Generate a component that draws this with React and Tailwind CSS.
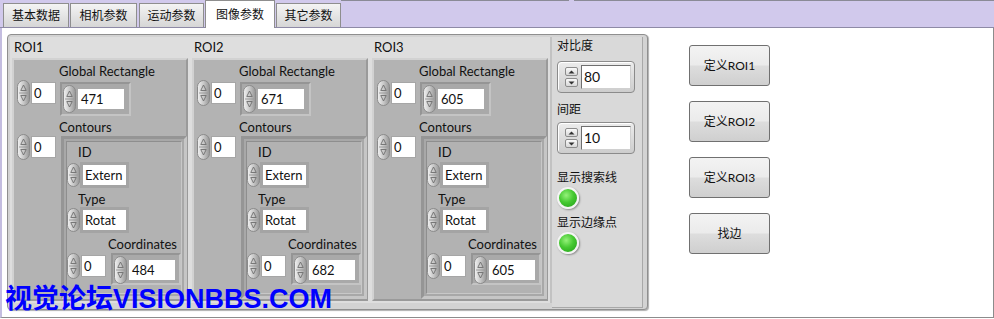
import { useId } from 'react';

const FONT = "font-['Lato','Noto_Sans_CJK_SC',sans-serif]";

function Pill({ h = 26 }) {
  const id = useId();
  const mid = h / 2;
  return (
    <svg width="13" height={h} viewBox={`0 0 13 ${h}`} className="shrink-0">
      <defs>
        <linearGradient id={id} x1="0" x2="1" y1="0" y2="0">
          <stop offset="0" stopColor="#f2f2f2" />
          <stop offset="0.5" stopColor="#c8c8c8" />
          <stop offset="1" stopColor="#959595" />
        </linearGradient>
      </defs>
      <rect x="0.5" y="0.5" width="12" height={h - 1} rx="6" fill={`url(#${id})`} stroke="#8a8a8a" />
      <line x1="2" y1={mid} x2="11" y2={mid} stroke="#9a9a9a" />
      <path d={`M6.5 ${mid - 8} L4 ${mid - 3} M6.5 ${mid - 8} L9 ${mid - 3} M3.5 ${mid - 2.5} H9.5`} stroke="#6e6e6e" fill="none" strokeWidth="0.9" />
      <path d={`M6.5 ${mid + 8} L4 ${mid + 3} M6.5 ${mid + 8} L9 ${mid + 3} M3.5 ${mid + 2.5} H9.5`} stroke="#6e6e6e" fill="none" strokeWidth="0.9" />
    </svg>
  );
}

function IndexCtl({ value, className = '' }) {
  return (
    <div className={`flex items-center ${className}`}>
      <Pill h={26} />
      <div className="ml-[1px] p-[1px] bg-[#a6a6a6]">
        <div className="w-[23px] h-[20px] bg-white text-[13px] leading-[20px] pl-[2px] text-[#111]">{value}</div>
      </div>
    </div>
  );
}

function TextCtl({ value, className = '' }) {
  return (
    <div className={`flex items-center ${className}`}>
      <Pill h={24} />
      <div className="p-[3px] bg-[#a4a4a4]">
        <div className="w-[43px] h-[20px] bg-white text-[13px] leading-[20px] pl-[2px] text-[#111]">{value}</div>
      </div>
    </div>
  );
}

function ElemFrame({ value, className = '' }) {
  return (
    <div className={`border-2 border-t-[#959595] border-l-[#959595] border-b-[#c4c4c4] border-r-[#c4c4c4] bg-[#a9a9a9] flex items-start ${className}`}>
      <div className="ml-[1px] mt-[1px]">
        <Pill h={28} />
      </div>
      <div className="ml-[2px] mt-[5px] w-[46px] h-[20px] bg-white text-[13px] leading-[20px] pl-[3px] text-[#111]">{value}</div>
    </div>
  );
}

function Roi({ name, rect, coord }) {
  return (
    <div className="w-[180px] flex flex-col">
      <div className="h-[21px] pl-[4px] text-[13px] leading-[21px] text-[#111]">{name}</div>
      <div className="mx-[2px] h-[243px] border-2 border-t-[#d2d2d2] border-l-[#d2d2d2] border-b-[#9a9a9a] border-r-[#9a9a9a] bg-[#b3b3b3] text-[#111]">
        <div className="ml-[45px] mt-[3px] h-[16px] text-[13px] leading-[16px]">Global Rectangle</div>
        <div className="flex items-start">
          <IndexCtl value="0" className="ml-[3px] mt-[1px]" />
          <ElemFrame value={rect} className="w-[71px] h-[34px] ml-[4px] mt-[3px]" />
        </div>
        <div className="ml-[45px] mt-[4px] h-[14px] text-[13px] leading-[14px]">Contours</div>
        <div className="flex items-start">
          <IndexCtl value="0" className="ml-[3px] mt-[0px]" />
          <div className="ml-[5px] mt-[2px] w-[126px] h-[163px] border-[3px] border-t-[#959595] border-l-[#959595] border-b-[#c6c6c6] border-r-[#c6c6c6] bg-[#a8a8a8] p-[2px]">
            <div className="h-full bg-[#b2b2b2] border border-t-[#8e8e8e] border-l-[#8e8e8e] border-b-[#c8c8c8] border-r-[#c8c8c8]">
              <div className="ml-[11px] mt-[3px] h-[15px] text-[13px] leading-[15px]">ID</div>
              <TextCtl value="Extern" className="mt-[2px]" />
              <div className="ml-[11px] mt-[4px] h-[15px] text-[13px] leading-[15px]">Type</div>
              <TextCtl value="Rotat" className="mt-[0px]" />
              <div className="ml-[41px] mt-[4px] h-[15px] text-[13px] leading-[15px]">Coordinates</div>
              <div className="flex items-start">
                <IndexCtl value="0" className="ml-[0px] mt-[1px]" />
                <ElemFrame value={coord} className="w-[70px] h-[32px] ml-[5px] mt-[1px]" />
              </div>
            </div>
          </div>
        </div>
      </div>
    </div>
  );
}

function Spin() {
  return (
    <div className="flex flex-col gap-[2px]">
      <div className="w-[13px] h-[9px] rounded-[2px] border border-[#8c8c8c] bg-linear-to-b from-[#fafafa] to-[#d8d8d8] flex items-center justify-center">
        <svg width="7" height="4" viewBox="0 0 7 4"><path d="M0.5 3.5 L3.5 0.5 L6.5 3.5 Z" fill="#333" /></svg>
      </div>
      <div className="w-[13px] h-[9px] rounded-[2px] border border-[#8c8c8c] bg-linear-to-b from-[#fafafa] to-[#d8d8d8] flex items-center justify-center">
        <svg width="7" height="4" viewBox="0 0 7 4"><path d="M0.5 0.5 L3.5 3.5 L6.5 0.5 Z" fill="#333" /></svg>
      </div>
    </div>
  );
}

function NumCtl({ value, className = '' }) {
  return (
    <div className={`w-[78px] h-[32px] rounded-[4px] border border-[#8b8b8b] bg-linear-to-b from-[#ececec] to-[#cdcdcd] shadow-[inset_1px_1px_0_#fff] flex items-center ${className}`}>
      <div className="ml-[7px]"><Spin /></div>
      <div className="ml-[3px] w-[50px] h-[24px] bg-white border border-t-[#6f6f6f] border-l-[#6f6f6f] border-b-[#d0d0d0] border-r-[#d0d0d0] text-[14px] leading-[22px] pl-[2px] text-[#111]">{value}</div>
    </div>
  );
}

function Led({ className = '' }) {
  return (
    <div className={`w-[22px] h-[22px] rounded-full border-2 border-[#f4f4f4] shadow-[1px_1px_2px_#8a8a8a] bg-[radial-gradient(circle_at_40%_35%,#95f27a_0%,#46c932_45%,#1f9c17_100%)] ${className}`} />
  );
}

function Btn({ children }) {
  return (
    <div className="w-[81px] h-[41px] rounded-[3px] border border-[#707070] bg-[linear-gradient(#f3f3f3_0%,#ebebeb_48%,#dddddd_52%,#cfcfcf_100%)] flex items-center justify-center text-[12px] text-[#111]">
      {children}
    </div>
  );
}

function Tab({ label, active, className = '' }) {
  if (active) {
    return (
      <div className={`relative z-10 h-[28px] -mb-px bg-white border border-b-0 border-[#8e8e8e] flex items-center justify-center text-[12px] text-[#111] ${className}`}>
        {label}
      </div>
    );
  }
  return (
    <div className={`h-[24px] border border-b-0 border-[#8e8e8e] bg-linear-to-b from-[#f4f4f4] to-[#d6d6d6] flex items-center justify-center text-[12px] text-[#111] ${className}`}>
      {label}
    </div>
  );
}

export default function App() {
  return (
    <div className={`relative w-[994px] h-[319px] overflow-hidden bg-white ${FONT}`}>
      <div className="h-[28px] bg-[#d1c9ec] border-b border-[#8e8aa6] flex items-end pl-[3px]">
        <Tab label="基本数据" className="w-[66px]" />
        <Tab label="相机参数" className="w-[67px] ml-[1px]" />
        <Tab label="运动参数" className="w-[65px] ml-[2px]" />
        <Tab label="图像参数" active className="w-[70px] ml-[1px]" />
        <Tab label="其它参数" className="w-[65px] ml-[1px]" />
        <div className="self-start flex-1 flex h-px">
          <div className="w-[228px] bg-[#8a8a96]" />
          <div className="w-[5px]" />
          <div className="flex-1 bg-[#8a8a96]" />
        </div>
      </div>

      <div className="flex h-[290px] border-l-2 border-l-[#c4bde0] border-r border-r-[#8c8c8c] border-b border-b-[#8c8c8c]">
        <div className="ml-[5px] mt-[6px] w-[641px] h-[276px] rounded-[4px] border border-[#8f8f8f] shadow-[1px_1px_1px_#b0b0b0] bg-[#d3d3d3] pl-[2px] pt-[2px] flex">
          <div className="flex h-[266px] bg-[#dedede] border-r-2 border-r-[#c2c2c2]">
            <Roi name="ROI1" rect="471" coord="484" />
            <Roi name="ROI2" rect="671" coord="682" />
            <Roi name="ROI3" rect="605" coord="605" />
          </div>
          <div className="w-[91px] h-[271px] bg-[#d9d9d9] border-r border-b border-[#a8a8a8] flex flex-col text-[12px] text-[#111]">
            <div className="ml-[5px] mt-[1px] h-[16px] leading-[16px]">对比度</div>
            <NumCtl value="80" className="ml-[5px] mt-[7px]" />
            <div className="ml-[5px] mt-[9px] h-[16px] leading-[16px]">间距</div>
            <NumCtl value="10" className="ml-[5px] mt-[4px]" />
            <div className="ml-[5px] mt-[16px] h-[16px] leading-[16px]">显示搜索线</div>
            <Led className="ml-[5px] mt-[1px]" />
            <div className="ml-[5px] mt-[6px] h-[16px] leading-[16px]">显示边缘点</div>
            <Led className="ml-[5px] mt-[1px]" />
          </div>
        </div>

        <div className="ml-[41px] mt-[17px] flex flex-col gap-[15px]">
          <Btn>定义ROI1</Btn>
          <Btn>定义ROI2</Btn>
          <Btn>定义ROI3</Btn>
          <Btn>找边</Btn>
        </div>
      </div>

      <div className="absolute left-[5px] top-[284px] text-[27px] leading-[30px] font-bold text-[#0000ff] font-['Liberation_Sans','Noto_Sans_CJK_SC',sans-serif]">
        视觉论坛VISIONBBS.COM
      </div>
    </div>
  );
}
